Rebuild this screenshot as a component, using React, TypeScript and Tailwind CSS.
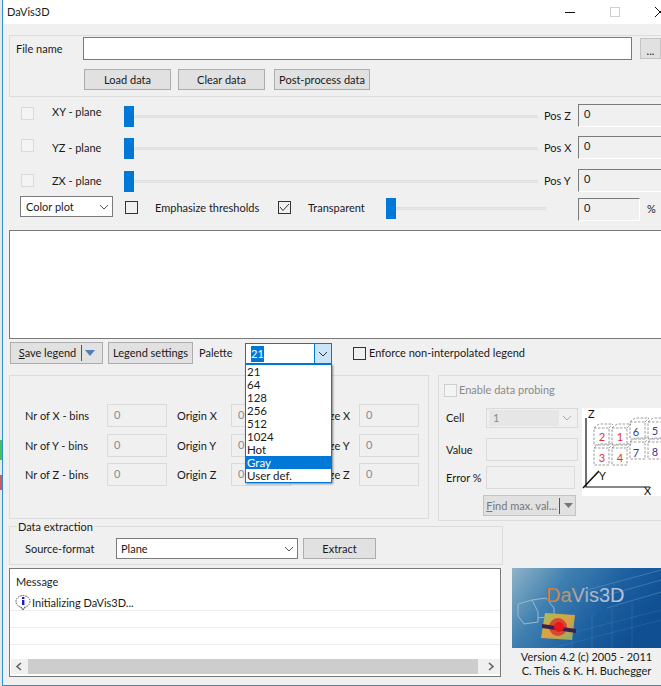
import type { ReactNode } from 'react';
import { clsx } from 'clsx';

function Chevron({ color = '#555' }: { color?: string }) {
  return (
    <svg width="10" height="6" viewBox="0 0 10 6" className="shrink-0">
      <path d="M1 1 L5 5 L9 1" fill="none" stroke={color} strokeWidth="1" />
    </svg>
  );
}

function Btn({ children, className }: { children: ReactNode; className?: string }) {
  return (
    <div className={clsx('flex shrink-0 items-center justify-center border border-[#adadad] bg-[#e1e1e1] whitespace-nowrap', className)}>
      {children}
    </div>
  );
}

function Check({ className }: { className?: string }) {
  return <div className={clsx('h-[13px] w-[13px] shrink-0 border', className)} />;
}

function Sunken({ value, className }: { value?: string; className?: string }) {
  return (
    <div className={clsx('flex h-[23px] shrink-0 items-start border border-[#dadada] pl-[6px] pt-[2px]', className)}>
      {value}
    </div>
  );
}

function PosInput({ className }: { className?: string }) {
  return (
    <div className={clsx('h-[23px] shrink-0 border-t border-l border-[#7a7a7a] border-r border-b border-r-white border-b-white pl-[5px] pt-[1px]', className)}>
      0
    </div>
  );
}

function Slider({ className }: { className?: string }) {
  return (
    <div className={clsx('flex h-[21px] shrink-0 items-center', className)}>
      <div className="h-[21px] w-[10px] shrink-0 bg-[#0078d7]" />
      <div className="h-[3px] flex-1 border-y border-[#e0e0e0] bg-[#e7e7e7]" />
    </div>
  );
}

function PlaneRow({ label, pos, checkTop, labelTop, className }: { label: string; pos: string; checkTop: string; labelTop: string; className: string }) {
  return (
    <div className={clsx('flex h-[23px] items-start pl-[18px]', className)}>
      <Check className={clsx('border-[#d9d9d9] bg-[#f4f4f4]', checkTop)} />
      <div className={clsx('ml-[18px] w-[72px] shrink-0', labelTop)}>{label}</div>
      <Slider className="mt-[2px] w-[414px]" />
      <div className="ml-[6px] mt-[4px] w-[34px] shrink-0 whitespace-nowrap">{pos}</div>
      <PosInput className="w-[90px]" />
    </div>
  );
}

function BinRow({ axis, className }: { axis: string; className?: string }) {
  return (
    <div className={clsx('flex h-[23px] items-center pl-[15px] whitespace-nowrap', className)}>
      <div className="w-[82px] shrink-0">Nr of {axis} - bins</div>
      <Sunken value="0" className="w-[60px] text-[#8a8a8a]" />
      <div className="ml-[10px] w-[54px] shrink-0">Origin {axis}</div>
      <Sunken value="0" className="w-[60px] text-[#8a8a8a]" />
      <div className="ml-[30px] w-[38px] shrink-0">Size {axis}</div>
      <Sunken value="0" className="w-[60px] text-[#8a8a8a]" />
    </div>
  );
}

const paletteItems = ['21', '64', '128', '256', '512', '1024', 'Hot', 'Gray', 'User def.'];

function CellDiagram() {
  const box = (x: number, y: number, w = 15, h = 17) => (
    <g key={`${x}-${y}`} fill="none" stroke="#707070" strokeWidth="0.7" strokeDasharray="2.5 1.5">
      <rect x={x} y={y} width={w} height={h} />
      <path d={`M${x} ${y} L${x + 5} ${y - 4} H${x + w + 4} M${x + w} ${y} L${x + w + 4} ${y - 4}`} />
    </g>
  );
  const nums: [string, number, number, string][] = [
    ['2', 20, 33, '#e0303c'], ['1', 38, 33, '#e0303c'], ['3', 20, 54, '#e0303c'], ['4', 38, 54, '#e0303c'],
    ['6', 54, 28, '#3a3a90'], ['5', 73, 27, '#3a3a90'], ['7', 54, 49, '#3a3a90'], ['8', 73, 48, '#3a3a90'],
  ];
  return (
    <svg width="79" height="88" viewBox="0 0 79 88" className="shrink-0 bg-white">
      {box(48, 14)}
      {box(66, 14)}
      {box(48, 34)}
      {box(66, 34)}
      {box(12, 20)}
      {box(30, 20)}
      {box(12, 40)}
      {box(30, 40)}
      <path d="M4 10 V79 H68" fill="none" stroke="#111" strokeWidth="1.2" />
      <path d="M1 80 L17 63" fill="none" stroke="#111" strokeWidth="1.6" />
      {nums.map(([n, x, y, c]) => (
        <text key={n} x={x} y={y} fontSize="11" fill={c} textAnchor="middle" fontFamily="Lato, sans-serif">{n}</text>
      ))}
      <text x="6" y="10" fontSize="11" fill="#111" fontFamily="Lato, sans-serif">Z</text>
      <text x="17" y="72" fontSize="11" fill="#111" fontFamily="Lato, sans-serif">Y</text>
      <text x="62" y="87" fontSize="11" fill="#111" fontFamily="Lato, sans-serif">X</text>
    </svg>
  );
}

function Logo() {
  return (
    <svg width="149" height="80" viewBox="0 0 149 80" className="shrink-0">
      <defs>
        <linearGradient id="logoBg" x1="0" y1="0" x2="1" y2="0.4">
          <stop offset="0" stopColor="#8fb4c8" />
          <stop offset="0.35" stopColor="#3f7fb0" />
          <stop offset="0.7" stopColor="#1c5f9f" />
          <stop offset="1" stopColor="#0f4f92" />
        </linearGradient>
        <linearGradient id="logoText" x1="0" y1="0" x2="1" y2="0">
          <stop offset="0" stopColor="#d9782c" />
          <stop offset="0.3" stopColor="#b89a78" />
          <stop offset="0.45" stopColor="#a8b0bc" />
          <stop offset="1" stopColor="#b9c9de" />
        </linearGradient>
        <linearGradient id="cube" x1="0" y1="0" x2="1" y2="1">
          <stop offset="0" stopColor="#9ec05a" />
          <stop offset="0.5" stopColor="#e0a040" />
          <stop offset="1" stopColor="#7fb070" />
        </linearGradient>
      </defs>
      <rect width="149" height="80" fill="url(#logoBg)" />
      <path d="M75 22 L149 2 M85 30 L149 12 M95 40 L149 24" stroke="#7fb2d8" strokeWidth="0.6" opacity="0.6" />
      <path d="M40 80 L149 52 M40 70 L149 42 M60 50 V80 M80 46 V80 M100 40 V80 M120 34 V80" stroke="#5f9ccb" strokeWidth="0.5" opacity="0.45" />
      <path d="M6 36 L20 32 L26 44 L26 54 L12 56 L6 48 Z M20 32 L34 30 L42 40 L42 48 L26 50" fill="none" stroke="#9db9cc" strokeWidth="1" />
      <text x="34" y="34" fontSize="20" fill="url(#logoText)" fontFamily="'Liberation Sans', sans-serif">DaVis3D</text>
      <path d="M33 45 L63 47 L60 72 L29 70 Z" fill="url(#cube)" />
      <circle cx="46" cy="59" r="9" fill="#d93030" opacity="0.8" />
      <path d="M30 56 L64 61 L64 65 L30 60 Z" fill="#3c2050" />
      <circle cx="47" cy="59" r="5" fill="#e8181a" />
    </svg>
  );
}

function InfoIcon() {
  return (
    <svg width="17" height="16" viewBox="0 0 17 16" className="shrink-0">
      <ellipse cx="8" cy="6.5" rx="7" ry="6" fill="#fff" stroke="#333" strokeWidth="0.9" strokeDasharray="1.5 1" />
      <path d="M6 12 L8 15 L10 12" fill="#fff" stroke="#333" strokeWidth="0.8" />
      <rect x="7" y="2" width="2.4" height="2" fill="#1a1ad0" />
      <rect x="7" y="5" width="2.4" height="5" fill="#1a1ad0" />
    </svg>
  );
}

export default function App() {
  return (
    <div className="flex h-[686px] w-[661px] overflow-hidden bg-white font-['Lato','Liberation_Sans',sans-serif] text-[11px] leading-[16px] text-[#1a1a1a]">
      {/* strip of the desktop behind the window */}
      <div className="flex w-[2px] shrink-0 flex-col bg-[#e8e8e8]">
        <div className="h-[440px] shrink-0" />
        <div className="h-[20px] shrink-0 bg-[#46c05a]" />
        <div className="h-[15px] shrink-0" />
        <div className="h-[15px] shrink-0 bg-[#d05a5a]" />
      </div>

      <div className="flex min-w-0 flex-1 flex-col border-l border-b border-[#2f8fd0] bg-[#f0f0f0]">
        <div className="flex h-[24px] shrink-0 items-center bg-white pl-[4px]">
          <span className="w-[42px] shrink-0">DaVis3D</span>
          <div className="ml-[516px] h-[1px] w-[10px] shrink-0 bg-[#111]" />
          <div className="ml-[35px] h-[10px] w-[10px] shrink-0 border border-[#cfcfcf]" />
          <svg width="10" height="10" viewBox="0 0 10 10" className="ml-[35px] shrink-0">
            <path d="M0 0 L10 10 M10 0 L0 10" stroke="#111" />
          </svg>
        </div>

        {/* file */}
        <div className="ml-[6px] mt-[11px] h-[62px] shrink-0 border border-r-0 border-[#dcdcdc]">
          <div className="flex items-center pt-[1px] pl-[6px]">
            <div className="w-[67px] shrink-0">File name</div>
            <div className="h-[23px] w-[549px] shrink-0 border border-[#7a7a7a] bg-white" />
            <Btn className="ml-[8px] h-[21px] w-[21px] items-end border-[#c4c4c4] leading-[15px]">...</Btn>
          </div>
          <div className="mt-[9px] flex pl-[74px]">
            <Btn className="h-[21px] w-[87px]">Load data</Btn>
            <Btn className="ml-[7px] h-[21px] w-[87px]">Clear data</Btn>
            <Btn className="ml-[9px] h-[21px] w-[96px]">Post-process data</Btn>
          </div>
        </div>

        <PlaneRow label="XY - plane" pos="Pos Z" checkTop="mt-[3px]" labelTop="mt-0" className="mt-[7px]" />
        <PlaneRow label="YZ - plane" pos="Pos X" checkTop="mt-[3px]" labelTop="mt-[4px]" className="mt-[9px]" />
        <PlaneRow label="ZX - plane" pos="Pos Y" checkTop="mt-[5px]" labelTop="mt-[4px]" className="mt-[10px]" />

        <div className="mt-[4px] flex h-[25px] shrink-0 items-start pl-[17px]">
          <div className="flex h-[21px] w-[93px] shrink-0 items-center justify-between border border-[#7a7a7a] bg-white pl-[5px] pr-[3px]">
            <span>Color plot</span>
            <Chevron />
          </div>
          <Check className="ml-[12px] mt-[5px] border-[#333]" />
          <div className="ml-[17px] mt-[4px] w-[123px] shrink-0 whitespace-nowrap">Emphasize thresholds</div>
          <div className="mt-[5px] flex h-[13px] w-[13px] shrink-0 items-center justify-center border border-[#333]">
            <svg width="11" height="9" viewBox="0 0 11 9"><path d="M1 4 L4 7.5 L10 1" fill="none" stroke="#333" strokeWidth="1" /></svg>
          </div>
          <div className="ml-[17px] mt-[4px] w-[78px] shrink-0">Transparent</div>
          <Slider className="mt-[2px] w-[160px]" />
          <PosInput className="ml-[32px] mt-[2px] w-[62px] border-[#7a7a7a] border-r-[#7a7a7a] border-b-[#7a7a7a]" />
          <div className="ml-[7px] mt-[5px]">%</div>
        </div>

        {/* legend */}
        <div className="ml-[6px] mt-[9px] h-[109px] shrink-0 border border-r-0 border-[#7a7a7a] bg-white" />

        <div className="relative z-10 mt-[3px] flex h-[22px] shrink-0 items-start pl-[7px]">
          <Btn className="h-[22px] w-[93px] pl-[1px]">
            <span><span className="underline">S</span>ave legend</span>
            <span className="ml-[5px] h-[16px] w-px bg-[#555]" />
            <svg width="10" height="6" viewBox="0 0 10 6" className="ml-[3px]"><path d="M0 0 H10 L5 6 Z" fill="#4f7fb8" /></svg>
          </Btn>
          <Btn className="ml-[5px] h-[22px] w-[85px]">Legend settings</Btn>
          <div className="ml-[6px] mt-[3px] w-[46px] shrink-0">Palette</div>
          <div className="relative mt-[1px] flex h-[21px] w-[87px] shrink-0 border border-[#0078d7] bg-white">
            <div className="flex flex-1 items-center pl-[5px]">
              <span className="bg-[#0078d7] text-white">21</span>
            </div>
            <div className="flex w-[17px] items-center justify-center border-l border-[#0078d7] bg-[#cce4f7]">
              <Chevron color="#333" />
            </div>
            <div className="absolute left-[-1px] top-[20px] w-[87px] border border-[#0078d7] bg-white shadow-[1px_1px_2px_rgba(0,0,0,0.45)]">
              {paletteItems.map((item) => (
                <div key={item} className={clsx('h-[13px] pl-[1px] text-[11.5px] leading-[13px]', item === 'Gray' && 'bg-[#0078d7] text-white')}>
                  {item}
                </div>
              ))}
            </div>
          </div>
          <Check className="ml-[21px] mt-[5px] border-[#333]" />
          <div className="ml-[3px] mt-[3px] whitespace-nowrap">Enforce non-interpolated legend</div>
        </div>

        <div className="ml-[6px] mt-[11px] flex h-[146px] shrink-0 items-start">
          <div className="h-[144px] w-[420px] shrink-0 border border-[#dcdcdc] pt-[28px]">
            <BinRow axis="X" />
            <BinRow axis="Y" className="mt-[7px]" />
            <BinRow axis="Z" className="mt-[6px]" />
          </div>
          <div className="ml-[9px] h-[146px] w-[223px] shrink-0 border border-r-0 border-[#dcdcdc] text-[#1a1a1a]">
            <div className="mt-[6px] flex items-center pl-[5px] text-[#8a8a8a]">
              <Check className="border-[#d0d0d0] bg-[#f4f4f4]" />
              <span className="ml-[2px]">Enable data probing</span>
            </div>
            <div className="mt-[10px] flex">
              <div className="w-[143px] shrink-0">
                <div className="flex h-[20px] items-center pl-[7px]">
                  <div className="w-[40px] shrink-0">Cell</div>
                  <div className="flex h-[20px] w-[92px] shrink-0 items-center justify-between border border-[#dadada] pl-[2px] pr-[5px] text-[#8a8a8a]">
                    <span className="h-[16px] w-[70px] bg-[#e6e6e6] pl-[4px]">1</span>
                    <Chevron color="#aaa" />
                  </div>
                </div>
                <div className="mt-[10px] flex h-[23px] items-center pl-[7px]">
                  <div className="w-[40px] shrink-0">Value</div>
                  <Sunken className="w-[92px]" />
                </div>
                <div className="mt-[5px] flex h-[23px] items-center pl-[7px]">
                  <div className="w-[40px] shrink-0">Error %</div>
                  <Sunken className="w-[89px]" />
                </div>
                <Btn className="ml-[44px] mt-[6px] h-[21px] w-[93px] border-[#c4c4c4] bg-[#cccccc] text-[#777]">
                  <span><span className="underline">F</span>ind max. val...</span>
                  <span className="ml-[2px] h-[16px] w-px bg-[#555]" />
                  <svg width="9" height="5" viewBox="0 0 9 5" className="ml-[4px]"><path d="M0 0 H9 L4.5 5 Z" fill="#777" /></svg>
                </Btn>
              </div>
              <CellDiagram />
            </div>
          </div>
        </div>

        <div className="ml-[6px] mt-[5px] flex h-[39px] w-[494px] shrink-0 flex-col border border-[#dcdcdc]">
          <div className="relative h-[11px] shrink-0">
            <span className="absolute left-[7px] top-[-8px] bg-[#f0f0f0] px-[1px]">Data extraction</span>
          </div>
          <div className="flex items-center pl-[15px]">
            <div className="w-[91px] shrink-0">Source-format</div>
            <div className="flex h-[21px] w-[182px] shrink-0 items-center justify-between border border-[#7a7a7a] bg-white pl-[4px] pr-[3px]">
              <span>Plane</span>
              <Chevron />
            </div>
            <Btn className="ml-[5px] h-[21px] w-[73px]">Extract</Btn>
          </div>
        </div>

        <div className="ml-[6px] mt-[3px] flex shrink-0 items-start">
          <div className="flex h-[109px] w-[492px] shrink-0 flex-col border border-[#7a7a7a] bg-white">
            <div className="h-[26px] shrink-0 pl-[6px] pt-[5px]">Message</div>
            <div className="flex h-[16px] shrink-0 items-center border-b border-[#eeeeee] pl-[5px]">
              <InfoIcon />
              <span>Initializing DaVis3D...</span>
            </div>
            <div className="h-[17px] shrink-0 border-b border-[#eeeeee]" />
            <div className="h-[17px] shrink-0 border-b border-[#eeeeee]" />
            <div className="ml-[1px] mt-[14px] flex h-[15px] w-[489px] shrink-0 items-center bg-[#f0f0f0]">
              <svg width="17" height="9" viewBox="0 0 17 9" className="shrink-0"><path d="M10 1 L6 4.5 L10 8" fill="none" stroke="#606060" strokeWidth="1.6" /></svg>
              <div className="h-[15px] w-[450px] bg-[#cdcdcd]" />
              <svg width="22" height="9" viewBox="0 0 22 9" className="shrink-0"><path d="M11 1 L15 4.5 L11 8" fill="none" stroke="#606060" strokeWidth="1.6" /></svg>
            </div>
          </div>
          <div className="ml-[11px] w-[149px] shrink-0">
            <Logo />
            <div className="mt-[2px] text-center leading-[14px] whitespace-nowrap">
              <div>Version 4.2 (c) 2005 - 2011</div>
              <div>C. Theis &amp; K. H. Buchegger</div>
            </div>
          </div>
        </div>
      </div>
    </div>
  );
}
